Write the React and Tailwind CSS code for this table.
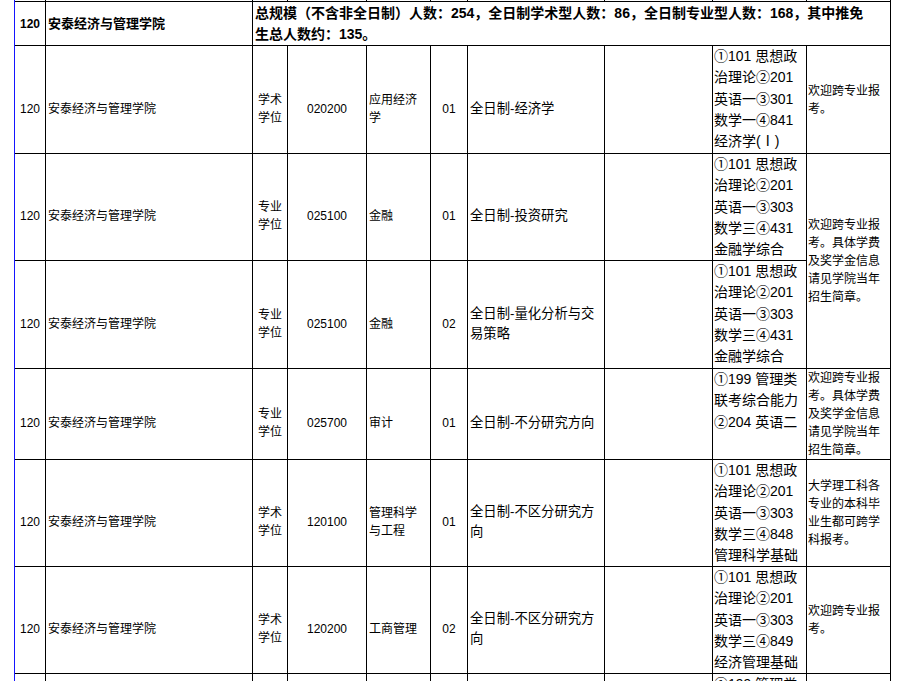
import React from "react";

const SUBJ_A = (d, c) => ["①101 思想政", "治理论②201", "英语一③" + d, c[0], c[1]];

const rows = [
  {
    deg: ["学术", "学位"], code: "020200", major: ["应用经济", "学"], dir: "01",
    name: ["全日制-经济学"],
    subj: ["①101 思想政", "治理论②201", "英语一③301", "数学一④841", "经济学(Ⅰ)"],
    remark: ["欢迎跨专业报", "考。"],
  },
  {
    deg: ["专业", "学位"], code: "025100", major: ["金融"], dir: "01",
    name: ["全日制-投资研究"],
    subj: SUBJ_A("303", ["数学三④431", "金融学综合"]),
    remark: ["欢迎跨专业报", "考。具体学费", "及奖学金信息", "请见学院当年", "招生简章。"],
    span: true,
  },
  {
    deg: ["专业", "学位"], code: "025100", major: ["金融"], dir: "02",
    name: ["全日制-量化分析与交", "易策略"],
    subj: SUBJ_A("303", ["数学三④431", "金融学综合"]),
    remark: null,
  },
  {
    deg: ["专业", "学位"], code: "025700", major: ["审计"], dir: "01",
    name: ["全日制-不分研究方向"],
    subj: ["①199 管理类", "联考综合能力", "②204 英语二"],
    remark: ["欢迎跨专业报", "考。具体学费", "及奖学金信息", "请见学院当年", "招生简章。"],
  },
  {
    deg: ["学术", "学位"], code: "120100", major: ["管理科学", "与工程"], dir: "01",
    name: ["全日制-不区分研究方", "向"],
    subj: SUBJ_A("303", ["数学三④848", "管理科学基础"]),
    remark: ["大学理工科各", "专业的本科毕", "业生都可跨学", "科报考。"],
  },
  {
    deg: ["学术", "学位"], code: "120200", major: ["工商管理"], dir: "02",
    name: ["全日制-不区分研究方", "向"],
    subj: SUBJ_A("303", ["数学三④849", "经济管理基础"]),
    remark: ["欢迎跨专业报", "考。"],
  },
];

function Lines({ items }) {
  return items.map((t, i) => (
    <span key={i} className="block whitespace-nowrap">
      {t}
    </span>
  ));
}

export default function App() {
  return (
    <div className="h-[681px] w-[898px] overflow-hidden bg-white pl-[14px] text-black font-['Liberation_Sans','Noto_Sans_CJK_SC',sans-serif]">
      <div className="-mt-[20px] grid w-max grid-cols-[30px_206px_34px_78px_63px_36px_136px_107px_93px_83px] grid-rows-[20px_43px_107px_106px_107px_90px_106px_106px_106px] gap-px border-l border-l-[#1515ff] bg-black pr-px pt-px">
        {/* previous row (scrolled off) */}
        {Array.from({ length: 10 }).map((_, i) => (
          <div key={"p" + i} className="bg-white" />
        ))}

        {/* header row */}
        <div className="flex items-center justify-center bg-white text-[12px] font-bold leading-[18px]">120</div>
        <div className="flex items-center bg-white pl-[2px] text-[13px] font-bold leading-[18px]">安泰经济与管理学院</div>
        <div className="col-span-8 flex items-center bg-white pl-[2px] text-[14px] font-bold leading-[21px]">
          <div>
            <span className="block whitespace-nowrap">
              总规模（不含非全日制）人数：254，全日制学术型人数：86，全日制专业型人数：168，其中推免
            </span>
            <span className="block whitespace-nowrap">生总人数约：135。</span>
          </div>
        </div>

        {rows.map((r, i) => (
          <React.Fragment key={i}>
            <div className="flex items-center justify-center bg-white pt-[18px] text-[12px] leading-[18px]">120</div>
            <div className="flex items-center bg-white pl-[2px] pt-[18px] text-[12px] leading-[18px]">安泰经济与管理学院</div>
            <div className="flex items-center justify-center bg-white pt-[18px] text-center text-[12px] leading-[18px]">
              <div><Lines items={r.deg} /></div>
            </div>
            <div className="flex items-center justify-center bg-white pt-[18px] text-[12px] leading-[18px]">{r.code}</div>
            <div className="flex items-center bg-white pl-[2px] pt-[18px] text-[12px] leading-[18px]">
              <div><Lines items={r.major} /></div>
            </div>
            <div className="flex items-center justify-center bg-white pt-[18px] text-[12px] leading-[18px]">{r.dir}</div>
            <div className="flex items-center bg-white pl-[2px] pt-[18px] text-[13.33px] leading-[20px]">
              <div><Lines items={r.name} /></div>
            </div>
            <div className="bg-white" />
            <div className="bg-white pl-[1px] text-[14px] leading-[21.25px]">
              <Lines items={r.subj} />
            </div>
            {r.remark && (
              <div className={"flex items-center bg-white pl-[1px] text-[12px] leading-[18px] " + (r.span ? "row-span-2" : "")}>
                <div><Lines items={r.remark} /></div>
              </div>
            )}
          </React.Fragment>
        ))}

        {/* next row, mostly below the fold */}
        {Array.from({ length: 8 }).map((_, i) => (
          <div key={"n" + i} className="bg-white" />
        ))}
        <div className="bg-white pl-[1px] text-[14px] leading-[21.25px]">
          <span className="block whitespace-nowrap">①199 管理类</span>
        </div>
        <div className="bg-white" />
      </div>
    </div>
  );
}
